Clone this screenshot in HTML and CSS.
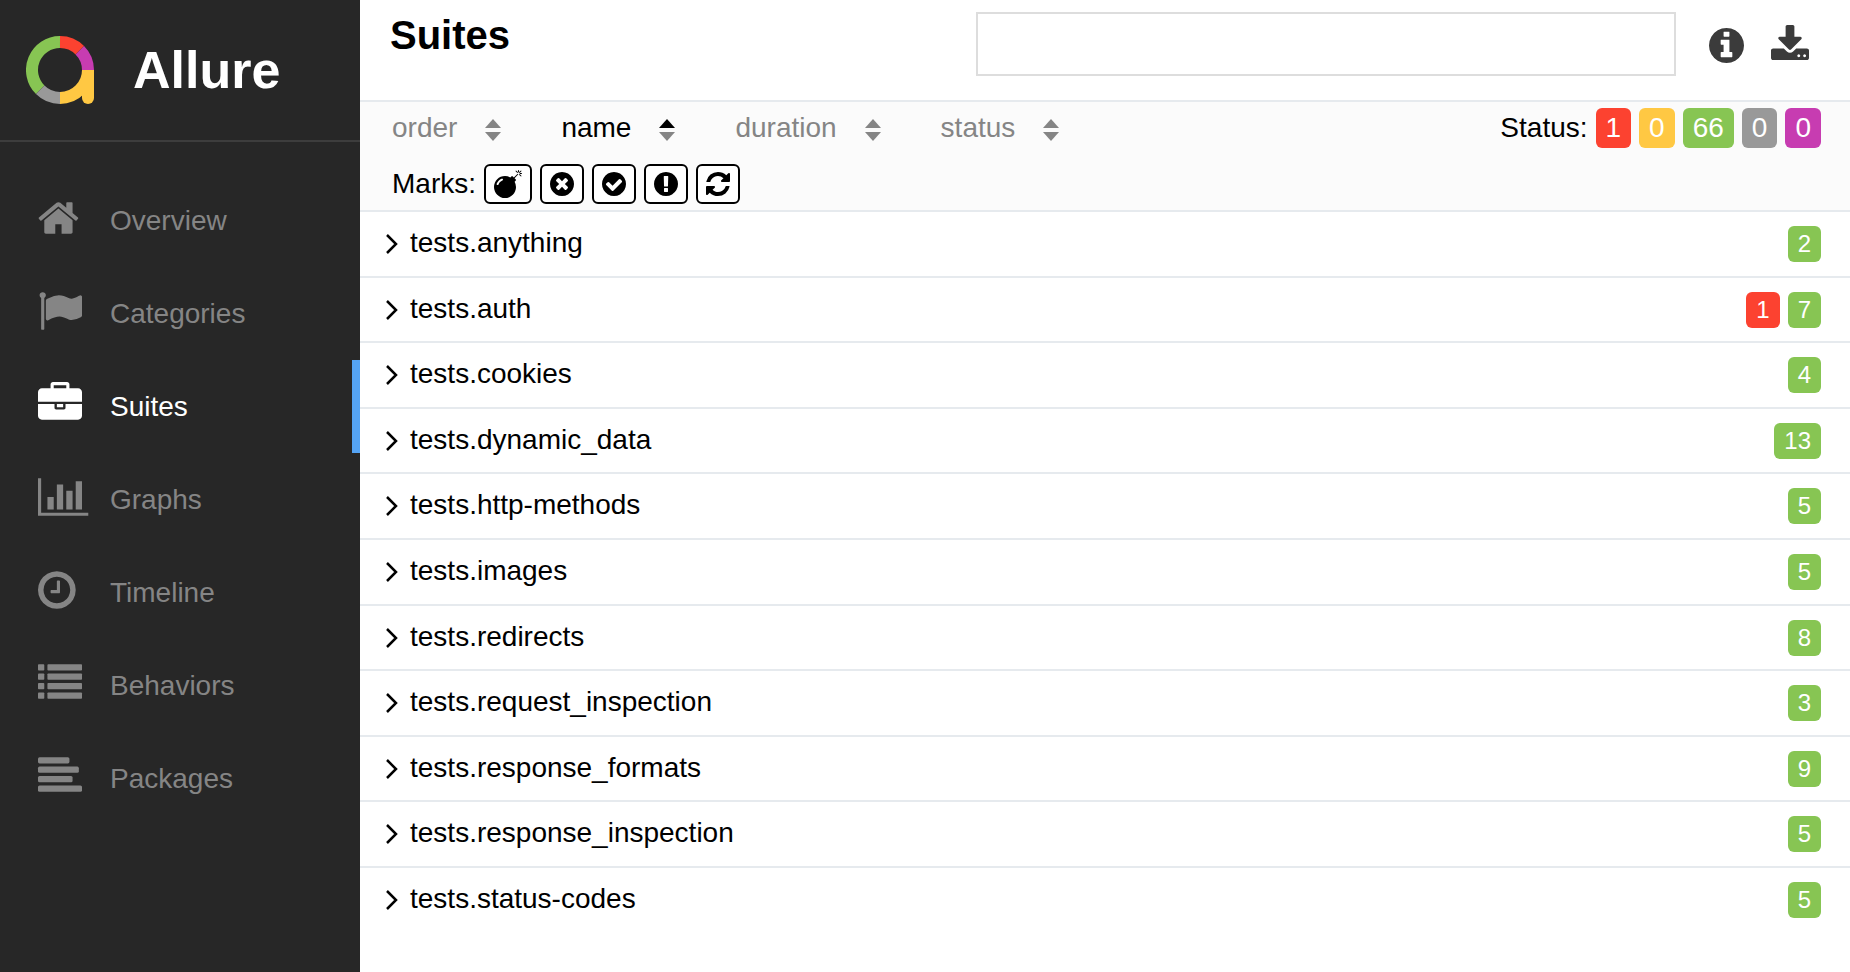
FILE: index.html
```html
<!DOCTYPE html>
<html lang="en">
<head>
<meta charset="utf-8">
<title>Allure Report - Suites</title>
<link rel="stylesheet" href="styles.css">
</head>
<body>
<div class="app">
  <aside class="side">
    <a class="brand" href="#">
      <svg class="brand-logo" viewBox="0 0 68 68" aria-hidden="true" fill="none" stroke-width="12">
        <path stroke="#87c553" d="M34 6A28 28 0 0 0 14.2 53.8"/>
        <path stroke="#999" d="M14.2 53.8A28 28 0 0 0 34 62"/>
        <path stroke="#fc4230" d="M34 6A28 28 0 0 1 53.8 14.2"/>
        <path stroke="#c73cb1" d="M53.8 14.2A28 28 0 0 1 62 34"/>
        <path stroke="#ffc843" d="M62 34A28 28 0 0 1 34 62"/>
        <path fill="#ffc843" d="M56 34h12v28a6 6 0 0 1-12 0z"/>
      </svg>
      <span class="brand-name">Allure</span>
    </a>
    <nav class="nav">
      <a class="nav-item" href="#">
        <span class="nav-icon"><svg viewBox="64 0 1792 1792" aria-hidden="true"><path d="M1472 992v480q0 26-19 45t-45 19h-384v-384h-256v384h-384q-26 0-45-19t-19-45v-480q0-1 .5-3t.5-3l575-474 575 474q1 2 1 6zm223-69l-62 74q-8 9-21 11h-3q-13 0-21-7l-692-577-692 577q-12 8-24 7-13-2-21-11l-62-74q-8-10-7-23.500t11-21.500l719-599q32-26 76-26t76 26l244 204v-195q0-14 9-23t23-9h192q14 0 23 9t9 23v408l219 182q10 8 11 21.500t-7 23.500z"/></svg></span>
        Overview</a>
      <a class="nav-item" href="#">
        <span class="nav-icon"><svg viewBox="0 0 1792 1792" aria-hidden="true"><path d="M320 256q0 72-64 110v1266q0 13-9.500 22.500t-22.500 9.500h-64q-13 0-22.500-9.500t-9.500-22.500v-1266q-64-38-64-110 0-53 37.500-90.500t90.500-37.500 90.500 37.500 37.500 90.500zm1472 64v763q0 25-12.500 38.500t-39.500 27.500q-215 116-369 116-61 0-123.500-22t-108.500-48-115.500-48-142.500-22q-192 0-464 146-17 9-33 9-26 0-45-19t-19-45v-742q0-32 31-55 21-14 79-43 236-120 421-120 107 0 200 29t219 88q38 19 88 19 54 0 117.500-21t110-47 88-47 54.500-21q26 0 45 19t19 45z"/></svg></span>
        Categories</a>
      <a class="nav-item nav-item-active" href="#" aria-current="page">
        <span class="nav-icon"><svg viewBox="0 0 1792 1792" aria-hidden="true"><path d="M640 256h512v-128h-512v128zm1152 640v480q0 66-47 113t-113 47h-1472q-66 0-113-47t-47-113v-480h672v160q0 26 19 45t45 19h320q26 0 45-19t19-45v-160h672zm-768 0v128h-256v-128h256zm768-480v384h-1792v-384q0-66 47-113t113-47h352v-160q0-40 28-68t68-28h576q40 0 68 28t28 68v160h352q66 0 113 47t47 113z"/></svg></span>
        Suites</a>
      <a class="nav-item" href="#">
        <span class="nav-icon"><svg viewBox="0 0 1792 1792" aria-hidden="true"><path d="M640 896v512h-256v-512h256zm384-512v1024h-256v-1024h256zm1024 1152v128h-2048v-1536h128v1408h1920zm-640-896v768h-256v-768h256zm384-384v1152h-256v-1152h256z"/></svg></span>
        Graphs</a>
      <a class="nav-item" href="#">
        <span class="nav-icon"><svg viewBox="128 0 1792 1792" aria-hidden="true"><path d="M1024 544v448q0 14-9 23t-23 9h-320q-14 0-23-9t-9-23v-64q0-14 9-23t23-9h224v-352q0-14 9-23t23-9h64q14 0 23 9t9 23zm416 352q0-148-73-273t-198-198-273-73-273 73-198 198-73 273 73 273 198 198 273 73 273-73 198-198 73-273zm224 0q0 209-103 385.500t-279.500 279.500-385.500 103-385.500-103-279.500-279.500-103-385.500 103-385.500 279.500-279.500 385.500-103 385.500 103 279.500 279.500 103 385.500z"/></svg></span>
        Timeline</a>
      <a class="nav-item" href="#">
        <span class="nav-icon"><svg viewBox="0 0 1792 1792" aria-hidden="true"><rect y="128" width="256" height="256" rx="32"/><rect x="384" y="128" width="1408" height="256" rx="32"/><rect y="512" width="256" height="256" rx="32"/><rect x="384" y="512" width="1408" height="256" rx="32"/><rect y="896" width="256" height="256" rx="32"/><rect x="384" y="896" width="1408" height="256" rx="32"/><rect y="1280" width="256" height="256" rx="32"/><rect x="384" y="1280" width="1408" height="256" rx="32"/></svg></span>
        Behaviors</a>
      <a class="nav-item" href="#">
        <span class="nav-icon"><svg viewBox="0 0 1792 1792" aria-hidden="true"><rect y="128" width="1280" height="256" rx="64"/><rect y="512" width="1664" height="256" rx="64"/><rect y="896" width="1408" height="256" rx="64"/><rect y="1280" width="1792" height="256" rx="64"/></svg></span>
        Packages</a>
    </nav>
  </aside>

  <main class="main">
    <header class="head">
      <h1 class="title">Suites</h1>
      <input class="search" type="text" aria-label="Search suites">
      <button class="tool" type="button" aria-label="Information"><svg class="info-icon" viewBox="128 0 1536 1792" aria-hidden="true"><path d="M1152 1376v-160q0-14-9-23t-23-9h-96v-512q0-14-9-23t-23-9h-320q-14 0-23 9t-9 23v160q0 14 9 23t23 9h96v320h-96q-14 0-23 9t-9 23v160q0 14 9 23t23 9h448q14 0 23-9t9-23zm-128-896v-160q0-14-9-23t-23-9h-192q-14 0-23 9t-9 23v160q0 14 9 23t23 9h192q14 0 23-9t9-23zm640 416q0 209-103 385.500t-279.500 279.500-385.500 103-385.500-103-279.500-279.500-103-385.500 103-385.500 279.500-279.500 385.500-103 385.500 103 279.500 279.500 103 385.500z"/></svg></button>
      <button class="tool" type="button" aria-label="Download CSV"><svg class="download-icon" viewBox="64 0 1664 1792" aria-hidden="true"><path d="M1344 1344q0-26-19-45t-45-19-45 19-19 45 19 45 45 19 45-19 19-45zm256 0q0-26-19-45t-45-19-45 19-19 45 19 45 45 19 45-19 19-45zm128-224v320q0 40-28 68t-68 28h-1472q-40 0-68-28t-28-68v-320q0-40 28-68t68-28h465l135 136q58 56 136 56t136-56l136-136h464q40 0 68 28t28 68zm-325-569q17 41-14 70l-448 448q-18 19-45 19t-45-19l-448-448q-31-29-14-70 17-39 59-39h256v-448q0-26 19-45t45-19h256q26 0 45 19t19 45v448h256q42 0 59 39z"/></svg></button>
    </header>

    <section class="controls" aria-label="Sorting and filters">
      <div class="control-row">
        <div class="sorters">
          <button class="sorter" type="button">order <svg class="sort-icon" viewBox="0 0 16 22" aria-hidden="true"><path d="M0 9 8 0l8 9z"/><path d="M0 13h16l-8 9z"/></svg></button>
          <button class="sorter sorter-active" type="button">name <svg class="sort-icon" viewBox="0 0 16 22" aria-hidden="true"><path class="sort-on" d="M0 9 8 0l8 9z"/><path d="M0 13h16l-8 9z"/></svg></button>
          <button class="sorter" type="button">duration <svg class="sort-icon" viewBox="0 0 16 22" aria-hidden="true"><path d="M0 9 8 0l8 9z"/><path d="M0 13h16l-8 9z"/></svg></button>
          <button class="sorter" type="button">status <svg class="sort-icon" viewBox="0 0 16 22" aria-hidden="true"><path d="M0 9 8 0l8 9z"/><path d="M0 13h16l-8 9z"/></svg></button>
        </div>
        <div class="filters">
          <span>Status:</span>
          <button class="filter failed" type="button" aria-label="Failed: 1">1</button>
          <button class="filter broken" type="button" aria-label="Broken: 0">0</button>
          <button class="filter passed" type="button" aria-label="Passed: 66">66</button>
          <button class="filter skipped" type="button" aria-label="Skipped: 0">0</button>
          <button class="filter unknown" type="button" aria-label="Unknown: 0">0</button>
        </div>
      </div>
      <div class="filters">
        <span>Marks:</span>
        <button class="mark" type="button" aria-label="Flaky"><svg class="bomb-icon" viewBox="0 0 1792 1792" aria-hidden="true"><path d="M571 589q-10-25-34-35t-49 0q-108 44-191 127t-127 191q-10 25 0 49t35 34q13 5 24 5 42 0 60-40 34-84 98.500-148.500t148.500-98.500q25-11 35-35t0-49zm942-356l46 46-244 243 68 68q19 19 19 45.500t-19 45.500l-64 64q89 161 89 343 0 143-55.500 273.500t-150 225-225 150-273.500 55.500-273.500-55.500-225-150-150-225-55.500-273.500 55.500-273.500 150-225 225-150 273.500-55.500q182 0 343 89l64-64q19-19 45.500-19t45.500 19l68 68zm8-56q-10 10-22 10-13 0-23-10l-91-90q-9-10-9-23t9-23q10-9 23-9t23 9l90 91q10 9 10 22.500t-10 22.500zm230 230q-11 9-23 9t-23-9l-90-91q-10-9-10-22.500t10-22.500q9-10 22.500-10t22.500 10l91 90q9 10 9 23t-9 23zm41-183q0 14-9 23t-23 9h-96q-14 0-23-9t-9-23 9-23 23-9h96q14 0 23 9t9 23zm-192-192v96q0 14-9 23t-23 9-23-9-9-23v-96q0-14 9-23t23-9 23 9 9 23zm151 55l-91 90q-10 10-22 10-13 0-23-10-10-9-10-22.500t10-22.500l90-91q10-9 23-9t23 9q9 10 9 23t-9 23z"/></svg></button>
        <button class="mark" type="button" aria-label="New failed"><svg class="mark-icon" viewBox="128 0 1536 1792" aria-hidden="true"><path d="M1277 1122q0-26-19-45l-181-181 181-181q19-19 19-45 0-27-19-46l-90-90q-19-19-46-19-26 0-45 19l-181 181-181-181q-19-19-45-19-27 0-46 19l-90 90q-19 19-19 46 0 26 19 45l181 181-181 181q-19 19-19 45 0 27 19 46l90 90q19 19 46 19 26 0 45-19l181-181 181 181q19 19 45 19 27 0 46-19l90-90q19-19 19-46zm387-226q0 209-103 385.500t-279.500 279.500-385.500 103-385.500-103-279.500-279.500-103-385.500 103-385.500 279.500-279.500 385.500-103 385.500 103 279.500 279.500 103 385.500z"/></svg></button>
        <button class="mark" type="button" aria-label="New passed"><svg class="mark-icon" viewBox="128 0 1536 1792" aria-hidden="true"><path d="M1412 734q0-28-18-46l-91-90q-19-19-45-19t-45 19l-408 407-226-226q-19-19-45-19t-45 19l-91 90q-18 18-18 46 0 27 18 45l362 362q19 19 45 19 27 0 46-19l543-543q18-18 18-45zm252 162q0 209-103 385.500t-279.500 279.500-385.500 103-385.500-103-279.500-279.500-103-385.500 103-385.500 279.500-279.500 385.500-103 385.500 103 279.500 279.500 103 385.500z"/></svg></button>
        <button class="mark" type="button" aria-label="New broken"><svg class="mark-icon" viewBox="128 0 1536 1792" aria-hidden="true"><path d="M896 128q209 0 385.500 103t279.500 279.500 103 385.500-103 385.500-279.500 279.500-385.500 103-385.500-103-279.500-279.500-103-385.500 103-385.500 279.500-279.500 385.500-103zm128 1247v-190q0-14-9-23.500t-22-9.500h-192q-13 0-23 10t-10 23v190q0 13 10 23t23 10h192q13 0 22-9.500t9-23.500zm-2-344l18-621q0-12-10-18-10-8-24-8h-220q-14 0-24 8-10 6-10 18l17 621q0 10 10 17.500t24 7.500h185q14 0 23.500-7.500t10.500-17.500z"/></svg></button>
        <button class="mark" type="button" aria-label="Retried"><svg class="mark-icon" viewBox="128 0 1536 1792" aria-hidden="true"><path d="M1639 1056q0 5-1 7-64 268-268 434.500t-478 166.500q-146 0-282.500-55t-243.500-157l-129 129q-19 19-45 19t-45-19-19-45v-448q0-26 19-45t45-19h448q26 0 45 19t19 45-19 45l-137 137q71 66 161 102t187 36q134 0 250-65t186-179q11-17 53-117 8-23 30-23h192q13 0 22.500 9.500t9.500 22.500zm25-800v448q0 26-19 45t-45 19h-448q-26 0-45-19t-19-45 19-45l138-138q-148-137-349-137-134 0-250 65t-186 179q-11 17-53 117-8 23-30 23h-199q-13 0-22.500-9.500t-9.500-22.500v-7q65-268 270-434.500t480-166.500q146 0 284 55.500t245 156.500l130-129q19-19 45-19t45 19 19 45z"/></svg></button>
      </div>
    </section>

    <div class="tree">
      <a class="node" href="#"><svg class="chevron" viewBox="0 0 12 20" aria-hidden="true"><path d="M1 1l9 9-9 9"/></svg><span class="node-name">tests.anything</span><span class="counts"><span class="count passed">2</span></span></a>
      <a class="node" href="#"><svg class="chevron" viewBox="0 0 12 20" aria-hidden="true"><path d="M1 1l9 9-9 9"/></svg><span class="node-name">tests.auth</span><span class="counts"><span class="count failed">1</span><span class="count passed">7</span></span></a>
      <a class="node" href="#"><svg class="chevron" viewBox="0 0 12 20" aria-hidden="true"><path d="M1 1l9 9-9 9"/></svg><span class="node-name">tests.cookies</span><span class="counts"><span class="count passed">4</span></span></a>
      <a class="node" href="#"><svg class="chevron" viewBox="0 0 12 20" aria-hidden="true"><path d="M1 1l9 9-9 9"/></svg><span class="node-name">tests.dynamic_data</span><span class="counts"><span class="count passed">13</span></span></a>
      <a class="node" href="#"><svg class="chevron" viewBox="0 0 12 20" aria-hidden="true"><path d="M1 1l9 9-9 9"/></svg><span class="node-name">tests.http-methods</span><span class="counts"><span class="count passed">5</span></span></a>
      <a class="node" href="#"><svg class="chevron" viewBox="0 0 12 20" aria-hidden="true"><path d="M1 1l9 9-9 9"/></svg><span class="node-name">tests.images</span><span class="counts"><span class="count passed">5</span></span></a>
      <a class="node" href="#"><svg class="chevron" viewBox="0 0 12 20" aria-hidden="true"><path d="M1 1l9 9-9 9"/></svg><span class="node-name">tests.redirects</span><span class="counts"><span class="count passed">8</span></span></a>
      <a class="node" href="#"><svg class="chevron" viewBox="0 0 12 20" aria-hidden="true"><path d="M1 1l9 9-9 9"/></svg><span class="node-name">tests.request_inspection</span><span class="counts"><span class="count passed">3</span></span></a>
      <a class="node" href="#"><svg class="chevron" viewBox="0 0 12 20" aria-hidden="true"><path d="M1 1l9 9-9 9"/></svg><span class="node-name">tests.response_formats</span><span class="counts"><span class="count passed">9</span></span></a>
      <a class="node" href="#"><svg class="chevron" viewBox="0 0 12 20" aria-hidden="true"><path d="M1 1l9 9-9 9"/></svg><span class="node-name">tests.response_inspection</span><span class="counts"><span class="count passed">5</span></span></a>
      <a class="node" href="#"><svg class="chevron" viewBox="0 0 12 20" aria-hidden="true"><path d="M1 1l9 9-9 9"/></svg><span class="node-name">tests.status-codes</span><span class="counts"><span class="count passed">5</span></span></a>
    </div>
  </main>
</div>
</body>
</html>
```
FILE: styles.css
```css
* {
  box-sizing: border-box;
}

body {
  margin: 0;
  font-family: "Liberation Sans", Arial, Helvetica, sans-serif;
  font-size: 28px;
  line-height: 1.2;
  color: #000;
  background: #fff;
}

a {
  color: inherit;
  text-decoration: none;
}

button {
  margin: 0;
  padding: 0;
  border: 0;
  background: none;
  color: inherit;
  font: inherit;
  cursor: pointer;
}

svg {
  display: block;
  flex: none;
  fill: currentColor;
  fill-rule: evenodd;
}

.app {
  display: flex;
  min-height: 100vh;
}

/* Sidebar */
.side {
  flex: none;
  width: 360px;
  background: #272727;
  color: #858585;
}

.brand {
  display: flex;
  align-items: center;
  gap: 39px;
  height: 142px;
  padding-left: 26px;
  border-bottom: 2px solid #3d3d3d;
}

.brand-logo {
  width: 68px;
  fill: none;
}

.brand-name {
  font-size: 52px;
  font-weight: bold;
  line-height: 60px;
  color: #fff;
}

.nav {
  padding-top: 32px;
}

.nav-item {
  display: flex;
  align-items: center;
  height: 93px;
  padding-left: 38px;
  border-right: 8px solid transparent;
}

.nav-item-active {
  color: #fff;
  border-right-color: #55a4f4;
}

.nav-icon {
  width: 72px;
  margin-bottom: 6px;
}

.nav-icon svg {
  width: 44px;
  height: 44px;
  overflow: visible;
}

/* Header */
.main {
  flex: 1;
  min-width: 0;
}

.head {
  display: flex;
  align-items: flex-start;
  padding: 12px 41px 24px 30px;
  border-bottom: 2px solid #e6eaee;
}

.title {
  flex: 1;
  margin: 0;
  font-size: 40px;
  line-height: 46px;
}

.search {
  width: calc(50% - 9px);
  height: 64px;
  margin-right: 6px;
  padding: 0 16px;
  border: 2px solid #ddd;
  background: #fff;
  font: inherit;
}

.tool {
  margin-top: 13px;
  margin-left: 27px;
  color: #3b3b3b;
}

.info-icon {
  width: 35px;
  height: 41px;
}

.download-icon {
  width: 38px;
  height: 41px;
}

/* Sorting and filters */
.controls {
  display: grid;
  gap: 16px;
  padding: 6px 29px 6px 32px;
  border-bottom: 2px solid #e6eaee;
  background: #fbfbfb;
}

.control-row {
  display: flex;
  justify-content: space-between;
}

.sorters {
  display: flex;
  gap: 60px;
}

.sorter {
  display: flex;
  align-items: center;
  gap: 28px;
  color: #858585;
}

.sorter-active {
  color: #000;
}

.sort-icon {
  width: 16px;
  height: 22px;
  margin-top: 4px;
  color: #858585;
}

.sort-on {
  fill: #000;
}

.filters {
  display: flex;
  align-items: center;
  gap: 8px;
}

.filter {
  height: 40px;
  padding: 0 10px;
  border-radius: 6px;
  color: #fff;
}

.mark {
  height: 40px;
  padding: 0 8px;
  border: 2px solid #000;
  border-radius: 6px;
  background: #fff;
}

.mark-icon {
  width: 24px;
  height: 28px;
}

.bomb-icon {
  width: 28px;
  height: 28px;
}

.failed {
  background: #fc4230;
}

.broken {
  background: #ffc843;
}

.passed {
  background: #87c553;
}

.skipped {
  background: #999;
}

.unknown {
  background: #c73cb1;
}

/* Suite list */
.node {
  display: flex;
  align-items: flex-start;
  padding: 14px 29px 16px 26px;
  border-bottom: 2px solid #e6eaee;
}

.node:last-child {
  border-bottom: 0;
}

.chevron {
  width: 12px;
  height: 20px;
  margin: 8px 12px 0 0;
  overflow: visible;
  fill: none;
  stroke: #000;
  stroke-width: 2.5;
}

.node-name {
  flex: 1;
}

.counts {
  display: flex;
  gap: 8px;
  margin-bottom: -4px;
}

.count {
  padding: 0 10px;
  border-radius: 6px;
  color: #fff;
  font-size: 24px;
  line-height: 36px;
}
```
